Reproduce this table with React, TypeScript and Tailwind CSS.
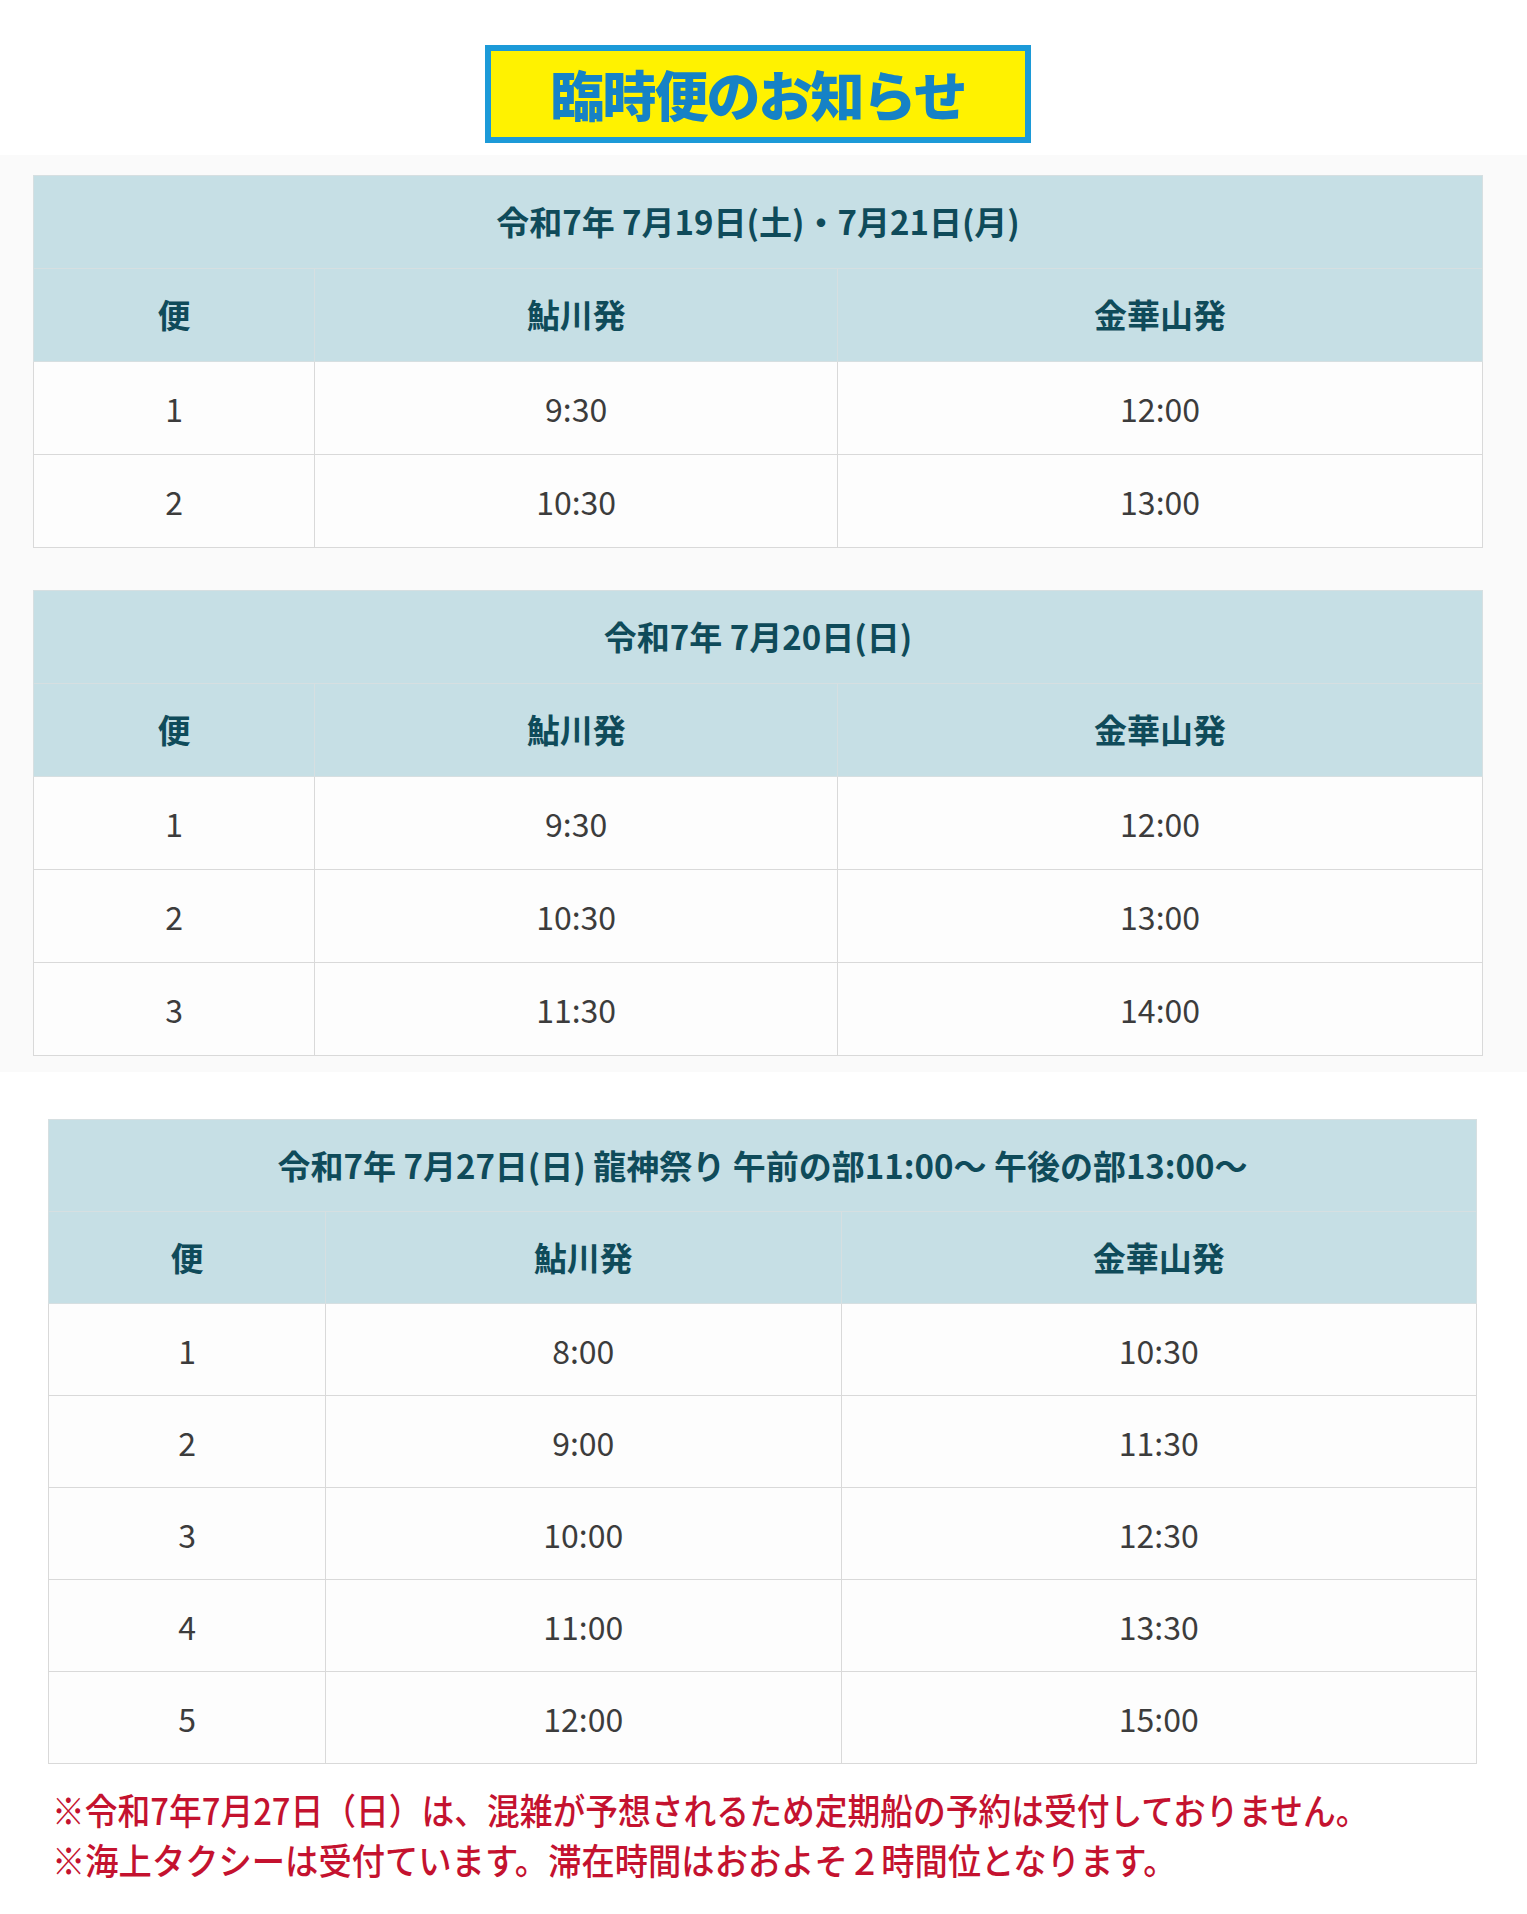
// App.tsx
// 臨時便のお知らせ：日付ごとの時刻表と注意書き。

type Schedule = {
  title: string;
  rows: [string, string, string][];
};

const schedules: Schedule[] = [
  {
    title: "令和7年 7月19日(土)・7月21日(月)",
    rows: [
      ["1", "9:30", "12:00"],
      ["2", "10:30", "13:00"],
    ],
  },
  {
    title: "令和7年 7月20日(日)",
    rows: [
      ["1", "9:30", "12:00"],
      ["2", "10:30", "13:00"],
      ["3", "11:30", "14:00"],
    ],
  },
];

const festival: Schedule = {
  title: "令和7年 7月27日(日) 龍神祭り 午前の部11:00〜 午後の部13:00〜",
  rows: [
    ["1", "8:00", "10:30"],
    ["2", "9:00", "11:30"],
    ["3", "10:00", "12:30"],
    ["4", "11:00", "13:30"],
    ["5", "12:00", "15:00"],
  ],
};

function TimeTable({ schedule, rowH }: { schedule: Schedule; rowH: string }) {
  const th = `${rowH} border border-[#d6dfe1] bg-[#c6dfe5] text-center align-middle text-[33px] font-bold text-[#0f4b5a]`;
  const td = `${rowH} border border-[#d9d9d9] bg-[#fdfdfd] text-center align-middle text-[32px] text-[#3c3c3c]`;
  return (
    <table className="w-full table-fixed border-collapse">
      <colgroup>
        <col className="w-[19.4%]" />
        <col className="w-[36.1%]" />
        <col className="w-[44.5%]" />
      </colgroup>
      <thead>
        <tr>
          <th colSpan={3} className={th}>
            {schedule.title}
          </th>
        </tr>
        <tr>
          <th className={th}>便</th>
          <th className={th}>鮎川発</th>
          <th className={th}>金華山発</th>
        </tr>
      </thead>
      <tbody>
        {schedule.rows.map((r) => (
          <tr key={r[0]}>
            <td className={td}>{r[0]}</td>
            <td className={td}>{r[1]}</td>
            <td className={td}>{r[2]}</td>
          </tr>
        ))}
      </tbody>
    </table>
  );
}

export default function App() {
  return (
    <div
      className="min-h-[1914px] w-[1527px] bg-white"
      style={{ fontFamily: '"Noto Sans CJK JP", "Noto Sans", sans-serif' }}
    >
      {/* 見出し */}
      <div className="pt-[45px] pb-[12px]">
        <div className="ml-[485px] flex h-[98px] w-[546px] items-center justify-center border-[6px] border-[#1c9ad8] bg-[#fff200]">
          <span className="text-[54px] font-black leading-none tracking-[-2px] text-[#1682c6]">
            臨時便のお知らせ
          </span>
        </div>
      </div>

      {/* 通常の臨時便 */}
      <div className="flex flex-col gap-[42px] bg-[#fafafa] pt-[20px] pb-[16px] pl-[33px] pr-[44px]">
        {schedules.map((s) => (
          <TimeTable key={s.title} schedule={s} rowH="h-[93px]" />
        ))}
      </div>

      {/* 龍神祭り */}
      <div className="pt-[47px] pl-[48px] pr-[50px]">
        <TimeTable schedule={festival} rowH="h-[92px]" />
      </div>

      {/* 注意書き */}
      <div className="pt-[20px] pl-[52px] text-[36px] font-medium leading-[50px] text-[#c4122f]">
        <p className="origin-left scale-x-[0.91] whitespace-nowrap">
          ※令和7年7月27日（日）は、混雑が予想されるため定期船の予約は受付しておりません。
        </p>
        <p className="origin-left scale-x-[0.925] whitespace-nowrap">
          ※海上タクシーは受付ています。滞在時間はおおよそ２時間位となります。
        </p>
      </div>
    </div>
  );
}
